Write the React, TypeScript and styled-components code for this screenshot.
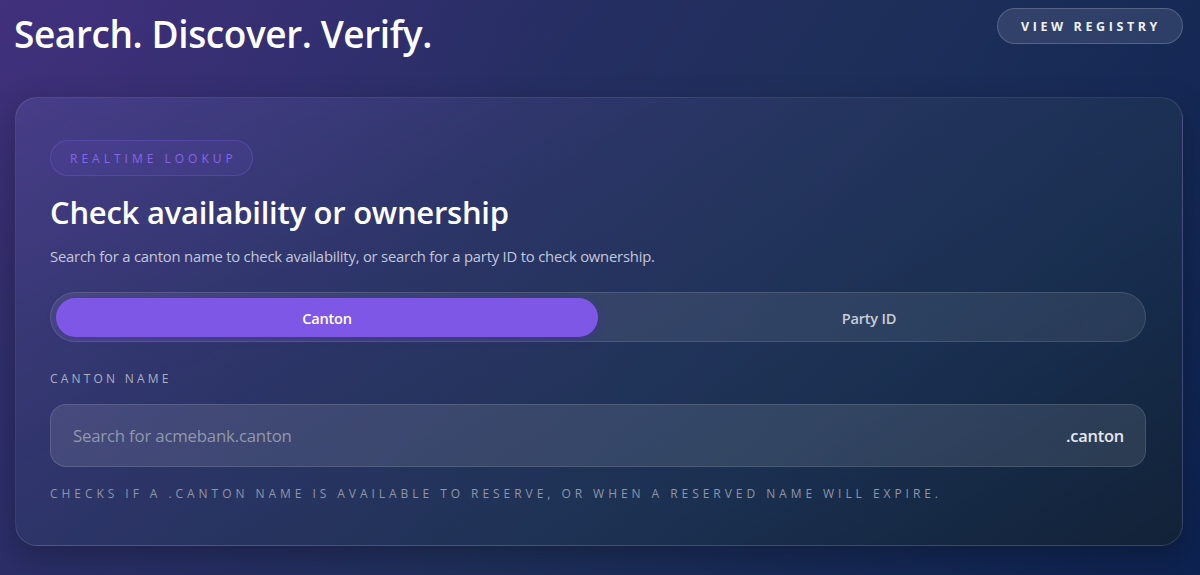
import React, { useState } from "react";
import styled, { createGlobalStyle } from "styled-components";

const GlobalStyle = createGlobalStyle`
  html, body { margin: 0; padding: 0; }
  body { font-family: "Open Sans", "Noto Sans", sans-serif; background: #1b2552; }
  * { box-sizing: border-box; }
`;

const Page = styled.div`
  width: 1200px;
  height: 575px;
  overflow: hidden;
  padding: 8px 17px 0 15px;
  background:
    radial-gradient(ellipse 800px 450px at 0% 0%, rgba(72, 50, 135, 0.5), transparent 70%),
    linear-gradient(125deg, #3a2e72 0%, #2b2e68 25%, #1e2f5a 55%, #0d2250 100%);
  display: flex;
  flex-direction: column;
  gap: 45px;
`;

const Header = styled.header`
  display: flex;
  justify-content: space-between;
  align-items: flex-start;
  height: 44px;
`;

const Title = styled.h1`
  margin: 3px 0 0 -1px;
  font-family: "Open Sans", "Noto Sans", sans-serif;
  font-size: 37px;
  font-weight: 600;
  letter-spacing: -0.4px;
  line-height: 46px;
  color: #ffffff;
`;

const GhostButton = styled.button`
  height: 36px;
  padding: 0 21px 0 23px;
  border-radius: 18px;
  border: 1px solid rgba(255, 255, 255, 0.18);
  background: rgba(255, 255, 255, 0.1);
  color: #eef1f8;
  font-family: "Open Sans", sans-serif;
  font-size: 12.5px;
  font-weight: 700;
  letter-spacing: 3.6px;
`;

const Card = styled.section`
  height: 449px;
  border-radius: 22px;
  border: 1px solid rgba(255, 255, 255, 0.12);
  background: linear-gradient(150deg, rgba(80, 72, 150, 0.55) 0%, rgba(52, 62, 110, 0.45) 35%, rgba(30, 55, 75, 0.45) 70%, rgba(20, 35, 45, 0.7) 100%);
  box-shadow: 0 10px 30px rgba(0, 0, 0, 0.25);
  padding: 42px 36px 0 34px;
  display: flex;
  flex-direction: column;
`;

const Badge = styled.span`
  align-self: flex-start;
  height: 36px;
  padding: 0 15px 0 19px;
  display: inline-flex;
  align-items: center;
  border-radius: 18px;
  border: 1px solid rgba(130, 100, 240, 0.3);
  background: rgba(120, 90, 230, 0.1);
  color: #8466e8;
  font-family: "Open Sans", sans-serif;
  font-size: 12px;
  font-weight: 500;
  letter-spacing: 4px;
`;

const Heading = styled.h2`
  margin: 16px 0 0 0;
  font-family: "Open Sans", sans-serif;
  font-size: 31px;
  font-weight: 600;
  letter-spacing: -0.25px;
  line-height: 40px;
  color: #ffffff;
`;

const Lead = styled.p`
  margin: 14px 0 0 0;
  font-family: "Open Sans", sans-serif;
  font-size: 14.8px;
  line-height: 20px;
  letter-spacing: -0.2px;
  color: #c3c8db;
`;

const Tabs = styled.div`
  margin-top: 26px;
  height: 50px;
  padding: 5px;
  border-radius: 25px;
  border: 1px solid rgba(255, 255, 255, 0.12);
  background: rgba(255, 255, 255, 0.08);
  display: grid;
  grid-template-columns: 1fr 1fr;
`;

const Tab = styled.button<{ $active?: boolean }>`
  border: none;
  border-radius: 20px;
  height: 39px;
  background: ${(p) => (p.$active ? "#7f57e6" : "transparent")};
  color: ${(p) => (p.$active ? "#ffffff" : "#c9ced9")};
  font-family: "Open Sans", sans-serif;
  font-size: 14.6px;
  font-weight: 600;
  letter-spacing: -0.2px;
  box-shadow: ${(p) => (p.$active ? "0 2px 8px rgba(80, 40, 180, 0.35)" : "none")};
  cursor: pointer;
`;

const FieldLabel = styled.label`
  margin-top: 29px;
  font-family: "Open Sans", sans-serif;
  font-size: 12px;
  letter-spacing: 3.2px;
  color: #aab0c2;
  line-height: 16px;
`;

const InputWrap = styled.div`
  margin-top: 17px;
  height: 63px;
  border-radius: 16px;
  border: 1px solid rgba(255, 255, 255, 0.12);
  background: rgba(255, 255, 255, 0.1);
  display: flex;
  align-items: center;
  padding: 0 21px 0 22px;
`;

const Input = styled.input`
  flex: 1;
  background: transparent;
  border: none;
  outline: none;
  padding: 0;
  color: #ffffff;
  font-family: "Open Sans", sans-serif;
  font-size: 16.8px;
  letter-spacing: -0.2px;
  &::placeholder { color: #9098ab; }
`;

const Suffix = styled.span`
  font-family: "Open Sans", sans-serif;
  font-size: 16.4px;
  font-weight: 600;
  color: #e4e7ee;
  letter-spacing: -0.2px;
`;

const Hint = styled.p`
  margin: 19px 0 0 0;
  font-family: "Open Sans", sans-serif;
  font-size: 12px;
  letter-spacing: 3.95px;
  color: #8e96a8;
  line-height: 16px;
  white-space: nowrap;
`;

export default function App() {
  const [mode, setMode] = useState<"canton" | "party">("canton");
  return (
    <>
      <GlobalStyle />
      <Page>
        <Header>
          <Title>Search. Discover. Verify.</Title>
          <GhostButton>VIEW REGISTRY</GhostButton>
        </Header>
        <Card>
          <Badge>REALTIME LOOKUP</Badge>
          <Heading>Check availability or ownership</Heading>
          <Lead>
            Search for a canton name to check availability, or search for a party ID to check ownership.
          </Lead>
          <Tabs>
            <Tab $active={mode === "canton"} onClick={() => setMode("canton")}>Canton</Tab>
            <Tab $active={mode === "party"} onClick={() => setMode("party")}>Party ID</Tab>
          </Tabs>
          <FieldLabel>CANTON NAME</FieldLabel>
          <InputWrap>
            <Input placeholder="Search for acmebank.canton" />
            <Suffix>.canton</Suffix>
          </InputWrap>
          <Hint>CHECKS IF A .CANTON NAME IS AVAILABLE TO RESERVE, OR WHEN A RESERVED NAME WILL EXPIRE.</Hint>
        </Card>
      </Page>
    </>
  );
}
